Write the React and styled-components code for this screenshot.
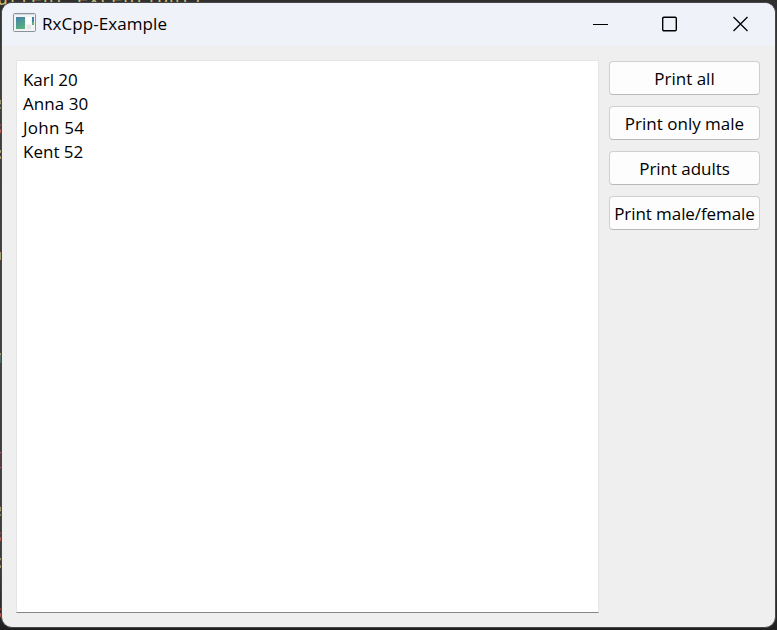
import React from "react";
import styled, { createGlobalStyle } from "styled-components";

const GlobalStyle = createGlobalStyle`
  * { box-sizing: border-box; }
  html, body { margin: 0; height: 100%; overflow: hidden; background: #2b2b2b; }
  #root { height: 100%; }
`;

const Desktop = styled.div`
  position: relative;
  height: 630px;
  width: 777px;
  padding: 2px 1px;
  background: linear-gradient(#303030, #3c3c3c 12%, #404040 50%, #3c3c3c 90%, #202020);
  font-family: "Open Sans", "Noto Sans", sans-serif;
  overflow: hidden;
`;

const CodeFragment = styled.span`
  position: absolute;
  left: ${(p) => p.$x}px;
  top: ${(p) => p.$y}px;
  font: 18.2px/20px "DejaVu Sans Mono", monospace;
  letter-spacing: 0.5px;
  color: ${(p) => p.$color || "#a99f70"};
  white-space: pre;
`;

const Window = styled.main`
  position: relative;
  display: flex;
  flex-direction: column;
  width: 775px;
  height: 626px;
  border: 1px solid #474747;
  border-radius: 11px;
  background: #efefef;
  overflow: hidden;
`;

const TitleBar = styled.header`
  display: flex;
  align-items: center;
  height: 43px;
  flex: none;
  padding-left: 11px;
  background: #f0f2f9;
`;

const AppIcon = styled.svg`
  width: 23px;
  height: 20px;
  margin: 0 6px 3px 0;
`;

const Title = styled.h1`
  flex: 1;
  margin: 0 0 2px;
  font-size: 17px;
  line-height: 24px;
  font-weight: 400;
  color: #000;
  white-space: nowrap;
  letter-spacing: 0.07px;
`;

const Controls = styled.div`
  display: flex;
`;

const ControlButton = styled.button`
  display: grid;
  place-items: center;
  width: 70px;
  height: 43px;
  padding: 0 0 2px;
  border: 0;
  background: none;
`;

const Content = styled.div`
  display: flex;
  flex: 1;
  align-items: flex-start;
  gap: 10px;
  padding: 14px 0 0 14px;
`;

const Output = styled.div`
  width: 583px;
  height: 553px;
  padding: 7px 6px;
  border: 1px solid #e5e5e5;
  border-bottom-color: #868686;
  background: #fff;
`;

const Line = styled.div`
  height: 24px;
  font-size: 17px;
  line-height: 24px;
  color: #000;
  white-space: nowrap;
  letter-spacing: ${(p) => p.$spacing}px;
`;

const Actions = styled.div`
  display: flex;
  flex-direction: column;
  gap: 11px;
  padding-top: 1px;
`;

const ActionButton = styled.button`
  display: flex;
  justify-content: center;
  align-items: center;
  width: 151px;
  height: 34px;
  padding: 1px 0 0;
  border: 1px solid #d0d0d0;
  border-bottom-color: #b9b9b9;
  border-radius: 4px;
  background: #fdfdfd;
  font: 17px/24px "Open Sans", "Noto Sans", sans-serif;
  color: #000;
  white-space: nowrap;
  letter-spacing: ${(p) => p.$spacing}px;
`;

const people = [
  { text: "Karl 20", spacing: -0.05 },
  { text: "Anna 30", spacing: 0.05 },
  { text: "John 54", spacing: 0.25 },
  { text: "Kent 52", spacing: 0 },
];

const actions = [
  { text: "Print all", spacing: 0 },
  { text: "Print only male", spacing: 0 },
  { text: "Print adults", spacing: -0.05 },
  { text: "Print male/female", spacing: -0.08 },
];

const fragments = [
  { text: "urrent_exception()", x: -3, y: -11, color: "#c8bb72" },
  { text: "e", x: -8, y: 93 },
  { text: "s", x: -8, y: 118, color: "#b85c68" },
  { text: ":", x: -5, y: 143 },
  { text: "o", x: -8, y: 245 },
  { text: "m", x: -8, y: 347 },
  { text: "[", x: -6, y: 450, color: "#b85c68" },
  { text: "e", x: -8, y: 500 },
  { text: "s", x: -8, y: 526, color: "#b85c68" },
  { text: "x", x: -8, y: 552 },
  { text: "s", x: -8, y: 602, color: "#b85c68" },
];

export default function App() {
  return (
    <>
      <GlobalStyle />
      <Desktop>
        {fragments.map((f) => (
          <CodeFragment key={f.y} $x={f.x} $y={f.y} $color={f.color}>{f.text}</CodeFragment>
        ))}
        <Window>
          <TitleBar>
            <AppIcon viewBox="0 0 23 20">
              <defs>
                <linearGradient id="panel" gradientUnits="userSpaceOnUse" x1="3" y1="4" x2="9" y2="16">
                  <stop stopColor="#477fac" />
                  <stop offset="1" stopColor="#59b27b" />
                </linearGradient>
              </defs>
              <rect x="0.5" y="0.5" width="22" height="18" rx="1" fill="#f3f3f4" stroke="#8b929b" />
              <path d="M1.5 1.5h20" stroke="#d4dae2" />
              <rect x="3" y="4" width="9" height="12" fill="url(#panel)" />
              <rect x="13" y="4" width="5" height="7" fill="#fff" />
              <rect x="19" y="4" width="2" height="5" fill="#477fac" />
              <rect x="19" y="9" width="2" height="3" fill="#59b27b" />
              <rect x="14" y="12" width="4" height="4" fill="#e6e6e6" />
            </AppIcon>
            <Title>RxCpp-Example</Title>
            <Controls>
              <ControlButton aria-label="Minimize">
                <svg width="16" height="16"><path d="M1 8.5h15" stroke="#000" /></svg>
              </ControlButton>
              <ControlButton aria-label="Maximize">
                <svg width="16" height="16"><rect x="0.7" y="1.2" width="13.6" height="13.6" rx="1.2" fill="none" stroke="#000" strokeWidth="1.4" /></svg>
              </ControlButton>
              <ControlButton aria-label="Close">
                <svg width="16" height="16"><path d="M1.5 1l14 14M15.5 1L1.5 15" stroke="#000" strokeWidth="1.3" /></svg>
              </ControlButton>
            </Controls>
          </TitleBar>
          <Content>
            <Output>
              {people.map((p) => <Line key={p.text} $spacing={p.spacing}>{p.text}</Line>)}
            </Output>
            <Actions>
              {actions.map((a) => <ActionButton key={a.text} $spacing={a.spacing}>{a.text}</ActionButton>)}
            </Actions>
          </Content>
        </Window>
      </Desktop>
    </>
  );
}
